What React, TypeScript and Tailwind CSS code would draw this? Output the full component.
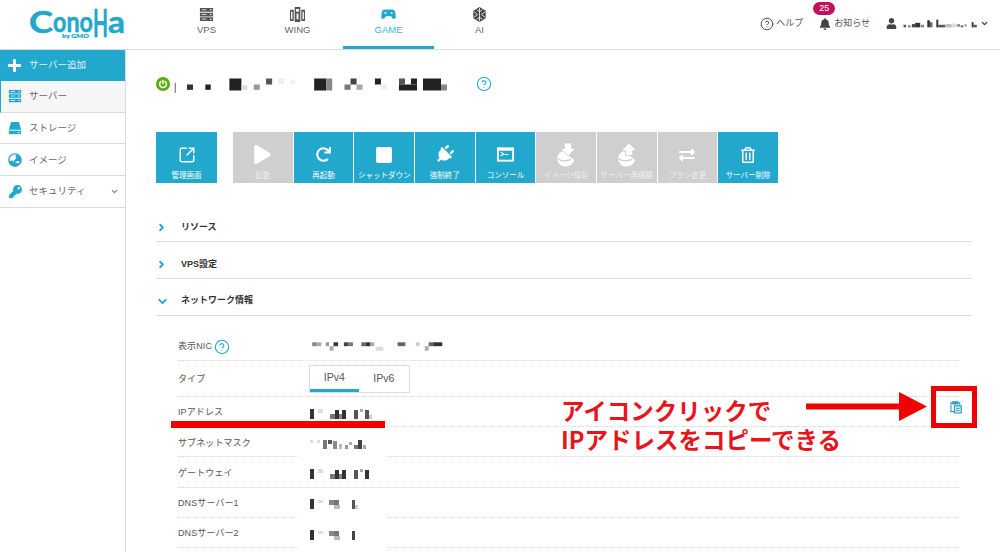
import type { ReactNode } from "react"
import { FaBell, FaExchangeAlt, FaGlobeAsia, FaKey, FaPlay, FaPlug, FaPlus, FaRedo, FaRegTrashAlt, FaUser } from "react-icons/fa"
import { ChevronDown, ChevronRight, CircleHelp, SquareArrowOutUpRight } from "lucide-react"

type Block = [number, number, number, number, string]

// ぼかし部分（モザイク）
function Mosaic({ box, width, height, blocks }: { box: string; width: number; height: number; blocks: Block[] }) {
  return (
    <svg viewBox={box} width={width} height={height} className="block shrink-0">
      {blocks.map(([x, y, w, h, c], i) => (
        <rect key={i} x={x} y={y} width={w} height={h} fill={c} />
      ))}
    </svg>
  )
}

const titleBlocks: Block[] = [
  [528, 245, 4, 30, "#888"], [565, 250, 18, 16, "#333"], [620, 250, 16, 16, "#222"], [692, 232, 36, 36, "#222"],
  [728, 252, 18, 14, "#ddd"], [765, 250, 18, 16, "#999"], [802, 232, 18, 18, "#555"], [838, 232, 18, 16, "#eee"],
  [875, 235, 14, 14, "#f0f0f0"], [946, 232, 36, 36, "#222"], [982, 232, 18, 36, "#888"], [1037, 250, 18, 16, "#777"],
  [1055, 232, 18, 18, "#444"], [1073, 250, 18, 16, "#aaa"], [1128, 232, 18, 18, "#222"], [1146, 250, 18, 16, "#eee"],
  [1200, 232, 18, 18, "#555"], [1200, 250, 54, 18, "#222"], [1236, 232, 18, 18, "#222"], [1272, 232, 54, 36, "#222"],
  [1326, 250, 18, 18, "#888"],
]

const userBlocks: Block[] = [
  [606, 74, 8, 8, "#555"], [620, 76, 8, 6, "#777"], [632, 72, 10, 10, "#444"], [642, 68, 16, 14, "#333"], [660, 74, 10, 8, "#888"],
  [680, 60, 8, 22, "#333"], [688, 66, 8, 16, "#666"], [708, 58, 6, 24, "#333"], [714, 74, 22, 8, "#555"], [736, 72, 20, 10, "#bbb"],
  [756, 70, 14, 12, "#ddd"], [772, 72, 10, 8, "#888"], [784, 76, 8, 6, "#666"], [796, 72, 6, 8, "#999"], [818, 66, 6, 16, "#333"], [824, 74, 10, 8, "#555"],
]

const nicBlocks: Block[] = [
  [480, 402, 14, 12, "#888"], [494, 402, 14, 12, "#aaa"], [522, 402, 10, 12, "#999"], [534, 414, 12, 14, "#aaa"], [546, 402, 14, 12, "#333"],
  [578, 402, 14, 12, "#444"], [592, 402, 14, 12, "#777"], [632, 402, 14, 12, "#666"], [646, 402, 14, 12, "#333"], [660, 402, 12, 12, "#aaa"],
  [676, 416, 24, 12, "#ddd"], [744, 402, 24, 12, "#666"], [800, 402, 12, 12, "#ccc"], [828, 414, 12, 14, "#aaa"], [840, 402, 14, 12, "#666"],
  [854, 402, 28, 12, "#333"],
]

const ipA: Block[] = [[0, 0, 4, 10, "#333"], [8, 0, 5, 4, "#ddd"], [20, 5, 5, 5, "#777"], [25, 1, 4, 9, "#333"], [29, 5, 3, 5, "#888"], [32, 1, 4, 9, "#333"], [44, 1, 4, 9, "#555"], [50, 0, 3, 3, "#aaa"], [55, 1, 4, 9, "#555"], [59, 6, 3, 4, "#ccc"]]
const ipGw: Block[] = [[0, 0, 4, 10, "#333"], [8, 0, 5, 4, "#ddd"], [20, 5, 5, 5, "#777"], [25, 1, 4, 9, "#333"], [29, 5, 3, 5, "#888"], [32, 1, 4, 9, "#333"], [44, 1, 4, 9, "#555"], [50, 0, 3, 3, "#aaa"], [55, 1, 4, 9, "#333"]]
const ipSub: Block[] = [[0, 1, 3, 3, "#ddd"], [7, 1, 3, 3, "#ddd"], [13, 1, 4, 9, "#777"], [18, 1, 4, 4, "#555"], [23, 2, 4, 8, "#888"], [29, 5, 3, 5, "#bbb"], [35, 6, 3, 4, "#999"], [39, 3, 3, 3, "#aaa"], [44, 6, 4, 4, "#777"], [48, 1, 4, 9, "#444"], [53, 6, 3, 4, "#aaa"]]
const dnsA: Block[] = [[0, 0, 4, 10, "#333"], [8, 1, 5, 3, "#ddd"], [19, 1, 5, 5, "#888"], [24, 1, 5, 5, "#777"], [24, 6, 6, 4, "#bbb"], [42, 1, 3, 9, "#555"], [45, 6, 3, 4, "#ccc"]]
const dnsB: Block[] = [[0, 0, 4, 10, "#333"], [8, 1, 5, 3, "#ddd"], [19, 1, 5, 5, "#888"], [24, 1, 5, 5, "#777"], [24, 6, 6, 4, "#bbb"], [42, 1, 3, 9, "#444"]]

// ロゴ（座標はヘッダー左上基準）
function Logo() {
  return (
    <svg viewBox="0 0 130 48" width="130" height="48" className="block" fill="#21a8cc" stroke="#21a8cc" fontFamily="Lato, sans-serif" fontWeight="700">
      <text strokeWidth=".5">
        <tspan x="29" y="33" fontSize="31" textLength="24" lengthAdjust="spacingAndGlyphs">C</tspan>
        <tspan x="53" y="32" fontSize="29" textLength="40" lengthAdjust="spacingAndGlyphs">ono</tspan>
        <tspan x="93" y="37" fontSize="38" textLength="15" lengthAdjust="spacingAndGlyphs">H</tspan>
        <tspan x="108" y="33" fontSize="31" textLength="17" lengthAdjust="spacingAndGlyphs">a</tspan>
      </text>
      <text x="62" y="38" fontSize="6" strokeWidth=".2" fontWeight="900" textLength="27" lengthAdjust="spacingAndGlyphs">by GMO</text>
    </svg>
  )
}

function ServerIcon({ size = 16 }: { size?: number }) {
  return (
    <svg viewBox="0 0 16 16" width={size} height={size} fill="currentColor">
      <path d="M1 1h14v4H1zM1 6h14v4H1zM1 11h14v4H1z" />
      <path d="M3 2.6h5v.8H3zM3 7.6h5v.8H3zM3 12.6h5v.8H3z" fill="#fff" />
      <circle cx="12.6" cy="3" r=".8" fill="#fff" /><circle cx="12.6" cy="8" r=".8" fill="#fff" /><circle cx="12.6" cy="13" r=".8" fill="#fff" />
    </svg>
  )
}

function WingIcon() {
  return (
    <svg viewBox="0 0 16 16" width="15" height="15" fill="currentColor">
      <path d="M5 0h6v16H5z" />
      <path d="M0 3h4v12H0zM12 3h4v12h-4z" />
      <path d="M6.5 2h3v3h-3zM1.2 5h1.4v8H1.2zM13.4 5h1.4v8h-1.4z" fill="#fff" />
      <path d="M7 7h2v6H7z" fill="#fff" />
    </svg>
  )
}

function GameIcon() {
  return (
    <svg viewBox="0 0 16 12" width="15" height="11" fill="currentColor">
      <path d="M4 .5h8c2 0 3 1 3.4 3.5l.5 4.5c.2 2.3-2.2 3-3.5 1.5L10.8 8H5.2L3.6 10C2.3 11.5-.1 10.8.1 8.5L.6 4C1 1.5 2 .5 4 .5z" />
      <path d="M3.3 3.8h3v1.2h-3z" fill="#fff" />
      <circle cx="11.5" cy="4.4" r="1" fill="#fff" />
    </svg>
  )
}

function AiIcon() {
  return (
    <svg viewBox="0 0 16 16" width="15" height="15">
      <path d="M8 0l6.6 4v8L8 16l-6.6-4V4z" fill="#444" />
      <path d="M8 1v14M2 5l4 3-4 3M14 5l-4 3 4 3M5 3l3 2 3-2M5 13l3-2 3 2" stroke="#fff" strokeWidth=".9" fill="none" />
    </svg>
  )
}

function StorageIcon() {
  return (
    <svg viewBox="0 0 16 16" width="14" height="14" fill="currentColor">
      <path d="M3.5 1h9L15 10H1z" />
      <path d="M1 11h14v4H1z" />
      <path d="M11 12.5h2.4v1H11z" fill="#fff" />
    </svg>
  )
}

function DiscIcon({ up }: { up?: boolean }) {
  return (
    <svg viewBox="0 0 24 24" width="24" height="24" fill="#fff">
      <path d="M9 8a8.5 8 0 1 0 11 9z" />
      <path d="M3.5 15.5c3 2.5 8 3 13.5 1" stroke="#cfcfcf" strokeWidth="1.4" fill="none" />
      {up
        ? <path d="M14 0l7.5 7.5h-4v5h-7v-5h-4z" stroke="#cfcfcf" strokeWidth=".8" />
        : <path d="M10.5 0h7v5.5h4L14 13 6.5 5.5h4z" stroke="#cfcfcf" strokeWidth=".8" />}
    </svg>
  )
}

function ConsoleIcon() {
  return (
    <svg viewBox="0 0 20 20" width="19" height="19" fill="none">
      <path d="M1 2.5h18v15H1z" fill="#fff" />
      <path d="M3 6h14v9.5H3z" fill="#21a8cc" />
      <path d="M5 7.5l3 2-3 2" stroke="#fff" strokeWidth="1.2" />
      <path d="M9 10h4" stroke="#fff" strokeWidth="1.2" />
    </svg>
  )
}

function CopyIcon() {
  return (
    <svg viewBox="0 0 13 14" width="12" height="13" fill="none" stroke="#2a9fbe" strokeWidth="1.2">
      <path d="M2.5 2H1v9.5h4" />
      <path d="M9 2h1.5v2.5" />
      <path d="M3 .8h5.5v2.4H3z" fill="#2a9fbe" />
      <path d="M4.8 5.2h7.4v7.8H4.8z" fill="#cfeaf2" />
      <path d="M6.5 8h4M6.5 10.3h4" strokeWidth=".9" />
    </svg>
  )
}

const actionsMain: { label: string; icon: ReactNode; off?: boolean }[] = [
  { label: "起動", icon: <FaPlay size={19} />, off: true },
  { label: "再起動", icon: <FaRedo size={15} /> },
  { label: "シャットダウン", icon: <span className="block h-[16px] w-[16px] rounded-[2px] bg-white" /> },
  { label: "強制終了", icon: <FaPlug size={19} className="rotate-45" /> },
  { label: "コンソール", icon: <ConsoleIcon /> },
  { label: "イメージ保存", icon: <DiscIcon />, off: true },
  { label: "サーバー再構築", icon: <DiscIcon up />, off: true },
  { label: "プラン変更", icon: <FaExchangeAlt size={16} />, off: true },
  { label: "サーバー削除", icon: <FaRegTrashAlt size={16} /> },
]

function Action({ label, icon, off }: { label: string; icon: ReactNode; off?: boolean }) {
  return (
    <div className={`flex h-[51px] flex-col items-center border-r border-white text-white ${off ? "bg-[#cfcfcf]" : "bg-[#21a8cc]"}`}>
      <div className="flex h-[36px] items-center justify-center pt-[9px]">{icon}</div>
      <span className={`mt-[2px] whitespace-nowrap text-[7.5px] leading-[12px] ${off ? "text-[#eeeeee]" : ""}`}>{label}</span>
    </div>
  )
}

function NavItem({ label, icon, active }: { label: string; icon: ReactNode; active?: boolean }) {
  return (
    <div className={`flex h-[49px] w-[91px] flex-col items-center border-b-[3px] pt-[7px] ${active ? "border-[#21a8cc] text-[#21a8cc]" : "border-transparent text-[#555]"}`}>
      <div className="flex h-[15px] items-center">{icon}</div>
      <span className={`mt-[1px] text-[9.5px] leading-[14px] ${active ? "text-[#47b4d2]" : "text-[#666]"}`}>{label}</span>
    </div>
  )
}

function SideItem({ label, icon, active, children }: { label: string; icon: ReactNode; active?: boolean; children?: ReactNode }) {
  return (
    <div className={`flex h-[31.7px] items-center border-b border-[#ddd] text-[#21a8cc] ${active ? "border-l border-l-[#21a8cc] bg-[#f6f6f6] pl-[7px]" : "pl-[8px]"}`}>
      <span className="flex w-[14px] justify-center">{icon}</span>
      <span className="ml-[7px] w-[65px] text-[9.5px] text-[#666]">{label}</span>
      {children}
    </div>
  )
}

function Section({ title, open }: { title: string; open?: boolean }) {
  return (
    <div className="flex h-[36.7px] items-center border-b border-[#ddd] pt-[9px]">
      <span className="flex w-[25px] text-[#21a8cc]">
        {open
          ? <ChevronDown size={13} strokeWidth={3.5} className="-ml-[0.5px]" />
          : <ChevronRight size={11} strokeWidth={4} />}
      </span>
      <span className="text-[9px] font-bold text-[#333]">{title}</span>
    </div>
  )
}

function InfoRow({ label, children, masked, className }: { label: ReactNode; children: ReactNode; masked?: boolean; className?: string }) {
  return (
    <div className={`flex items-center border-b border-dotted border-[#d8d8d8] text-[9px] text-[#555] ${className ?? "h-[30.3px] pt-[3px]"}`}>
      <div className="flex w-[120px] items-center gap-[2px] tracking-[0.1px]">{label}</div>
      {masked
        ? <div className="-mb-px flex h-full w-[89px] items-center bg-white pl-[12px]">{children}</div>
        : <div className="pl-[12px]">{children}</div>}
    </div>
  )
}

export default function App() {
  return (
    <div className="relative h-[552px] w-[1000px] overflow-hidden bg-white font-['Liberation_Sans','Noto_Sans_CJK_JP',sans-serif]">
      {/* ヘッダー */}
      <header className="flex h-[50px] items-start border-b border-[#ddd]">
        <div className="h-[49px] w-[161px]">
          <Logo />
        </div>
        <nav className="flex">
          <NavItem label="VPS" icon={<ServerIcon size={15} />} />
          <NavItem label="WING" icon={<WingIcon />} />
          <NavItem label="GAME" icon={<GameIcon />} active />
          <NavItem label="AI" icon={<AiIcon />} />
        </nav>
        <div className="ml-auto flex h-[47px] items-center pr-[11px] text-[9px] text-[#555]">
          <CircleHelp size={14} strokeWidth={1.6} className="text-[#444]" />
          <span className="ml-[2px]">ヘルプ</span>
          <div className="relative ml-[16px] flex items-center">
            <FaBell size={12} className="text-[#444]" />
            <span className="ml-[3px]">お知らせ</span>
            <span className="absolute -top-[15px] -left-[6px] flex h-[13px] w-[22px] items-center justify-center rounded-[7px] bg-[#c2115c] text-[9px] text-white">25</span>
          </div>
          <FaUser size={11} className="ml-[16px] text-[#444]" />
          <div className="ml-[5px]">
            <Mosaic box="605 56 232 28" width={77} height={9} blocks={userBlocks} />
          </div>
          <ChevronDown size={9} strokeWidth={3.5} className="ml-[1px] text-[#333]" />
        </div>
      </header>

      <div className="flex">
        {/* サイドバー */}
        <aside className="h-[502px] w-[126px] shrink-0 border-r border-[#ddd]">
          <div className="flex h-[31px] items-center bg-[#21a8cc] pl-[7px] text-white">
            <FaPlus size={15} />
            <span className="ml-[7px] text-[9.5px] text-[#e4f4f9]">サーバー追加</span>
          </div>
          <SideItem label="サーバー" icon={<ServerIcon size={14} />} active />
          <SideItem label="ストレージ" icon={<StorageIcon />} />
          <SideItem label="イメージ" icon={<FaGlobeAsia size={14} />} />
          <SideItem label="セキュリティ" icon={<FaKey size={13} />}>
            <ChevronDown size={9} strokeWidth={3} className="ml-[16px] text-[#777]" />
          </SideItem>
        </aside>

        {/* メイン */}
        <main className="flex-1 pl-[30px] pr-[28px]">
          <div className="flex h-[68px] items-center">
            <span className="flex h-[14px] w-[14px] items-center justify-center rounded-full bg-[#5aaa0a]">
              <svg viewBox="0 0 14 14" width="14" height="14" fill="none" stroke="#fff" strokeWidth="1.5" strokeLinecap="round">
                <path d="M7 3.4v3.4" />
                <path d="M4.8 4.6a3.4 3.4 0 1 0 4.4 0" />
              </svg>
            </span>
            <div className="ml-[2px]">
              <Mosaic box="520 225 830 50" width={277} height={17} blocks={titleBlocks} />
            </div>
            <CircleHelp size={16} strokeWidth={1.6} className="ml-[27px] text-[#21a8cc]" />
          </div>

          <div className="mt-[14px] flex items-start">
            <div className="w-[61px] [&>div]:border-r-0">
              <Action label="管理画面" icon={<SquareArrowOutUpRight size={18} strokeWidth={2} />} />
            </div>
            <div className="ml-[16px] grid w-[546px] grid-cols-9">
              {actionsMain.map((a) => (
                <Action key={a.label} {...a} />
              ))}
            </div>
          </div>

          <div className="mt-[22.5px]">
            <Section title="リソース" />
            <Section title="VPS設定" />
            <Section title="ネットワーク情報" open />
          </div>

          <div className="ml-[22px] mr-[12px] pt-[15px]">
            <InfoRow label={<>表示NIC <CircleHelp size={16} strokeWidth={1.6} className="text-[#21a8cc]" /></>}>
              <Mosaic box="480 398 410 34" width={137} height={11} blocks={nicBlocks} />
            </InfoRow>
            <InfoRow label="タイプ" className="h-[36px] pt-[2px]">
              <div className="-ml-[1.5px] flex h-[28px] w-[101px] border border-[#ddd] text-[10.5px] text-[#555]">
                <div className="flex w-1/2 items-center justify-center border-b-[3px] border-[#21a8cc]">IPv4</div>
                <div className="flex w-1/2 items-center justify-center">IPv6</div>
              </div>
            </InfoRow>
            <InfoRow label="IPアドレス" masked><Mosaic box="0 0 64 10" width={64} height={10} blocks={ipA} /></InfoRow>
            <InfoRow label="サブネットマスク" masked><Mosaic box="0 0 56 10" width={56} height={10} blocks={ipSub} /></InfoRow>
            <InfoRow label="ゲートウェイ" masked><Mosaic box="0 0 60 10" width={60} height={10} blocks={ipGw} /></InfoRow>
            <InfoRow label="DNSサーバー1" masked><Mosaic box="0 0 50 10" width={50} height={10} blocks={dnsA} /></InfoRow>
            <InfoRow label="DNSサーバー2" masked><Mosaic box="0 0 50 10" width={50} height={10} blocks={dnsB} /></InfoRow>
          </div>
        </main>
      </div>

      {/* 赤い注釈 */}
      <div className="absolute left-[171px] top-[421px] h-[7px] w-[214px] bg-[#f50000]" />
      <div className="absolute left-[561px] top-[396px] whitespace-nowrap text-[23.5px] font-bold leading-[29px] text-[#e8141c] font-['Noto_Sans_CJK_JP',sans-serif]">
        <div>アイコンクリックで</div>
        <div>IPアドレスをコピーできる</div>
      </div>
      <svg className="absolute left-[806px] top-[392px]" width="121" height="30" viewBox="0 0 121 30" fill="#f00000">
        <path d="M0 11.5h93V0l28 14.5L93 29V17.5H0z" />
      </svg>
      <div className="absolute left-[931px] top-[386px] flex h-[42px] w-[46px] items-center justify-center border-[5px] border-[#f00000] pl-[3px]">
        <CopyIcon />
      </div>
    </div>
  )
}
